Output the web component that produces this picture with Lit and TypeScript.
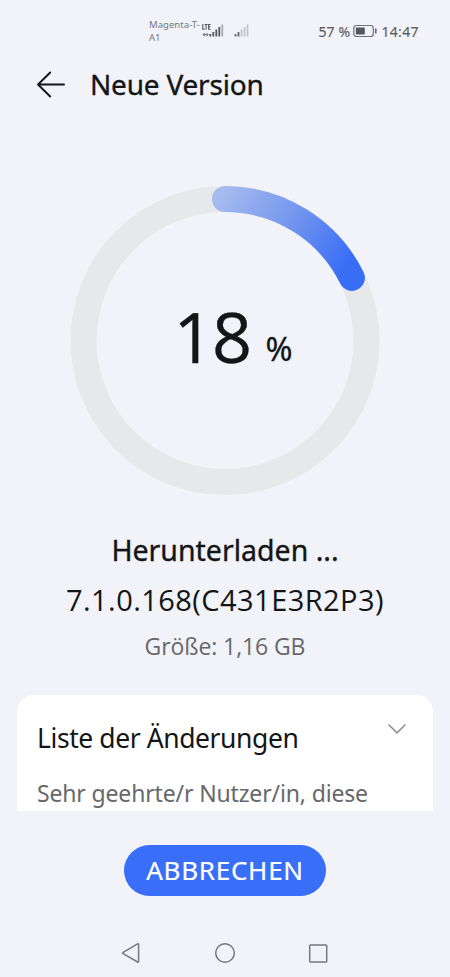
import { LitElement, html, css, svg } from "lit";
import { customElement, property } from "lit/decorators.js";

@customElement("status-bar")
class StatusBar extends LitElement {
  static styles = css`
    :host { display: flex; height: 60px; color: #5d5e61; }
    .carrier { margin: 18px 0 0 149px; width: 53px; font-size: 9.5px; line-height: 13px; letter-spacing: 0.05px; white-space: nowrap; color: #77787b; }
    .signals { width: 50px; height: 20px; margin-top: 20px; }
    .right { display: flex; align-items: center; height: 20px; margin: 21px 0 0 66.5px; font-size: 14px; white-space: nowrap; }
    .battery { width: 25px; height: 14px; margin: 0 4px 0 1px; }
    .percent { width: 33px; letter-spacing: 0.1px; }
    .clock { letter-spacing: 0.3px; }
    .right span { -webkit-text-stroke: 0.15px currentColor; }
  `;
  render() {
    return html`
      <div class="carrier">Magenta-T-<br />A1</div>
      <svg class="signals" viewBox="0 0 50 20" fill="none">
        <path d="M0.8 4v5.2h2M2.6 4.5h3M4.1 4.5v5M8.6 4.5h-2v4.7h2M6.6 6.8h1.8" stroke="#55565a" stroke-width="1.1"/>
        <path d="M1.2 14.7h4.5M2.8 13l-1.6 1.7 1.6 1.6M4.5 13l1.6 1.7-1.6 1.6" stroke="#66676b" stroke-width="1"/>
        <path d="M8.3 14v2.5M11.3 12v4.5M14.3 9.5v7M17.3 7v9.5" stroke="#55565a" stroke-width="1.8"/>
        <path d="M20.3 4.5v12" stroke="#a5a6aa" stroke-width="1.7"/>
        <path d="M33.5 14v2.5M36.5 12v4.5" stroke="#66676b" stroke-width="1.8"/>
        <path d="M39.5 9.5v7M42.5 7v9.5M45.5 4.5v12" stroke="#c4c5c9" stroke-width="1.8"/>
      </svg>
      <div class="right">
        <span class="percent">57 %</span>
        <svg class="battery" viewBox="0 0 25 14" fill="none">
          <rect x="0.8" y="1.5" width="19.5" height="11" rx="2.6" stroke="#707174" stroke-width="1.2"/>
          <rect x="2.8" y="3.5" width="9" height="7" rx="0.6" fill="#56575a"/>
          <path d="M22.8 4.5v5" stroke="#5d5e61" stroke-width="1.5"/>
        </svg>
        <span class="clock">14:47</span>
      </div>`;
  }
}

@customElement("progress-ring")
class ProgressRing extends LitElement {
  @property({ type: Number }) value = 0;
  static styles = css`
    :host { display: grid; width: 310px; height: 310px; }
    .ring, .label { grid-area: 1 / 1; }
    .ring { width: 310px; height: 310px; }
    .label { display: flex; align-items: flex-start; padding: 103px 0 0 104px; height: 96px; color: #141517; }
    .number { font: 70px/96px "Open Sans", sans-serif; letter-spacing: -1.5px; -webkit-text-stroke: 0.4px currentColor; }
    .unit { font: 32.5px/96px "Noto Sans", sans-serif; margin: 13px 0 0 15px; -webkit-text-stroke: 0.3px currentColor; }
  `;
  render() {
    const r = 141.5;
    const a = ((this.value - 0.3) / 100) * Math.PI * 2;
    const x = 155 + r * Math.sin(a);
    const y = 155.5 - r * Math.cos(a);
    return html`
      <svg class="ring" viewBox="0 0 310 310" fill="none">
        <defs>
          <linearGradient id="sweep" gradientUnits="userSpaceOnUse" x1="148" y1="13" x2="274" y2="86">
            <stop offset="0" stop-color="#a6bbef"/>
            <stop offset="0.5" stop-color="#7597ee"/>
            <stop offset="1" stop-color="#386df6"/>
          </linearGradient>
        </defs>
        <circle cx="155" cy="155.5" r=${r} stroke="#e6e8e9" stroke-width="26"/>
        ${svg`<path d="M155 ${155.5 - r}A${r} ${r} 0 0 1 ${x} ${y}" stroke="url(#sweep)" stroke-width="26" stroke-linecap="round"/>`}
      </svg>
      <div class="label"><span class="number">${this.value}</span><span class="unit">%</span></div>`;
  }
}

@customElement("app-root")
class AppRoot extends LitElement {
  static styles = css`
    :host { display: flex; flex-direction: column; width: 450px; height: 977px; overflow: hidden; background: #f1f3f8; color: #141517; font-family: "Noto Sans", sans-serif; }
    .header { display: flex; align-items: center; height: 50px; padding-left: 36px; flex: none; }
    .back { width: 30px; height: 30px; margin-right: 24px; }
    .title { font-size: 28px; letter-spacing: -0.2px; -webkit-text-stroke: 0.35px currentColor; line-height: 48px; height: 50px; white-space: nowrap; }
    progress-ring { margin: 75px 0 0 69.5px; flex: none; }
    .info { display: flex; flex-direction: column; align-items: center; margin-top: 30px; flex: none; white-space: nowrap; }
    .state { font-size: 28.5px; -webkit-text-stroke: 0.35px currentColor; line-height: 50px; }
    .version { font: 29px/50px "Open Sans", sans-serif; letter-spacing: 0.45px; }
    .size { font: 23px/42px "Open Sans", sans-serif; letter-spacing: -0.1px; color: #67686b; }
    .card { height: 116px; margin: 28px 17px 0; padding: 18px 20px 0; box-sizing: border-box; border-radius: 17px 17px 0 0; background: #fff; overflow: hidden; flex: none; white-space: nowrap; }
    .cardhead { display: flex; justify-content: space-between; height: 50px; }
    .cardtitle { font-size: 26.5px; line-height: 50px; letter-spacing: -0.42px; }
    .chevron { width: 20px; height: 12px; margin: 10px 6px 0 0; }
    .body { font-size: 23px; line-height: 36px; margin-top: 12px; letter-spacing: -0.15px; color: #67686b; }
    .cancel { width: 202px; height: 51px; margin: 34px auto 0 124px; border: 0; border-radius: 26px; padding: 0; background: #396ff8; color: #fff; font: 26px/51px "Noto Sans", sans-serif; letter-spacing: 0.75px; -webkit-text-stroke: 0.2px currentColor; text-align: center; flex: none; }
    .nav { display: flex; justify-content: space-between; align-items: center; padding: 0 121px 0 120px; height: 24px; margin-top: 45px; flex: none; }
    .nav svg { width: 22px; height: 22px; fill: none; stroke: #77787b; stroke-width: 1.5; stroke-linejoin: round; }
  `;
  render() {
    return html`
      <status-bar></status-bar>
      <header class="header">
        <svg class="back" viewBox="0 0 30 30" fill="none" stroke="#141517" stroke-width="1.9" stroke-linecap="round" stroke-linejoin="round"><path d="M14.2 2.5L2 14.5l12.2 12M2 14.5h26"/></svg>
        <span class="title">Neue Version</span>
      </header>
      <progress-ring .value=${18}></progress-ring>
      <div class="info">
        <span class="state">Herunterladen ...</span>
        <span class="version">7.1.0.168(C431E3R2P3)</span>
        <span class="size">Größe: 1,16 GB</span>
      </div>
      <section class="card">
        <div class="cardhead">
          <span class="cardtitle">Liste der Änderungen</span>
          <svg class="chevron" viewBox="0 0 20 12" fill="none" stroke="#929397" stroke-width="1.7" stroke-linecap="round" stroke-linejoin="round"><path d="M2 2l8 7.8L18 2"/></svg>
        </div>
        <div class="body">Sehr geehrte/r Nutzer/in, diese</div>
      </section>
      <button class="cancel">ABBRECHEN</button>
      <nav class="nav">
        <svg viewBox="0 0 22 22"><path d="M3.2 10.4L17.6 1.9q1-.5 1 .6v17q0 1-1 .5L3.2 11.6q-1-.6 0-1.2z"/></svg>
        <svg viewBox="0 0 22 22"><circle cx="11" cy="11" r="9.3"/></svg>
        <svg viewBox="0 0 22 22"><rect x="2.7" y="3" width="17" height="17" rx="0.8"/></svg>
      </nav>`;
  }
}
